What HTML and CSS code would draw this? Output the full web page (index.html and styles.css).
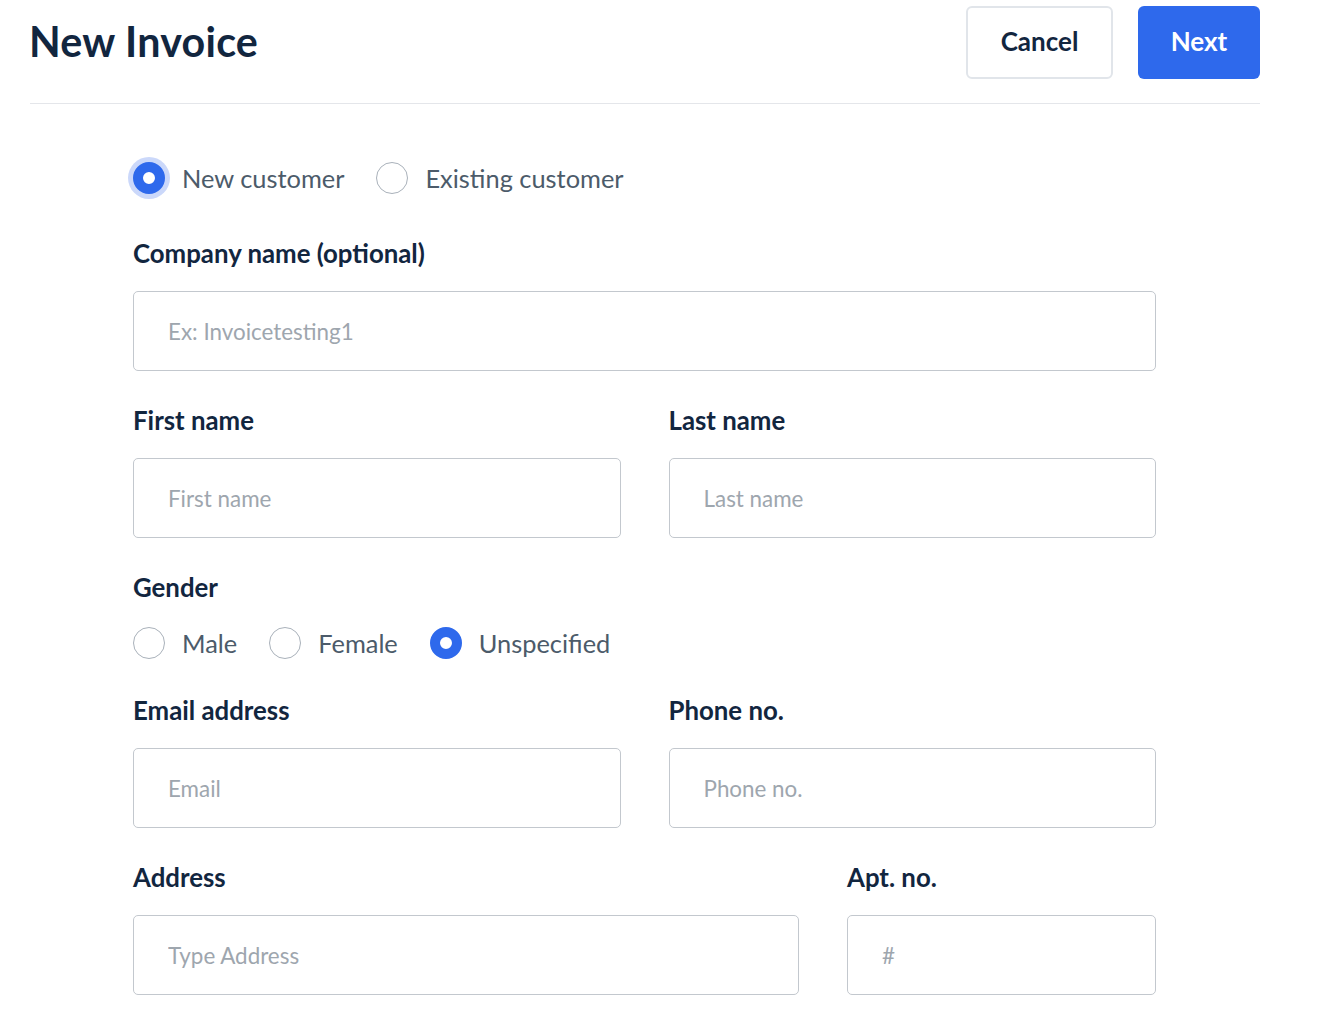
FILE: index.html
```html
<!DOCTYPE html>
<html lang="en">
<head>
  <meta charset="UTF-8" />
  <meta name="viewport" content="width=device-width, initial-scale=1.0"/>
  <title>New Invoice</title>
  <link rel="stylesheet" href="styles.css">
</head>
<body>
  <div class="page">
    <div class="header">
      <h1>New Invoice</h1>
      <div class="header-actions">
        <button class="btn cancel-btn">Cancel</button>
        <button class="btn next-btn">Next</button>
      </div>
    </div>

    <form class="invoice-form">
      <div class="radio-row customer-type">
        <label class="radio-option">
          <input type="radio" name="customer" class="radio focus" checked />
          <span>New customer</span>
        </label>
        <label class="radio-option">
          <input type="radio" name="customer" class="radio" />
          <span>Existing customer</span>
        </label>
      </div>

      <div class="field">
        <label class="field-label">Company name (optional)</label>
        <input type="text" class="text-input" placeholder="Ex: Invoicetesting1" />
      </div>

      <div class="field-row">
        <div class="field">
          <label class="field-label">First name</label>
          <input type="text" class="text-input" placeholder="First name" />
        </div>
        <div class="field">
          <label class="field-label">Last name</label>
          <input type="text" class="text-input" placeholder="Last name" />
        </div>
      </div>

      <div class="field gender-field">
        <label class="field-label">Gender</label>
        <div class="radio-row gender-row">
          <label class="radio-option">
            <input type="radio" name="gender" class="radio" />
            <span>Male</span>
          </label>
          <label class="radio-option">
            <input type="radio" name="gender" class="radio" />
            <span>Female</span>
          </label>
          <label class="radio-option">
            <input type="radio" name="gender" class="radio" checked />
            <span>Unspecified</span>
          </label>
        </div>
      </div>

      <div class="field-row">
        <div class="field">
          <label class="field-label">Email address</label>
          <input type="email" class="text-input" placeholder="Email" />
        </div>
        <div class="field">
          <label class="field-label">Phone no.</label>
          <input type="tel" class="text-input" placeholder="Phone no." />
        </div>
      </div>

      <div class="field-row address-row">
        <div class="field">
          <label class="field-label">Address</label>
          <input type="text" class="text-input" placeholder="Type Address" />
        </div>
        <div class="field">
          <label class="field-label">Apt. no.</label>
          <input type="text" class="text-input" placeholder="#" />
        </div>
      </div>
    </form>
  </div>
</body>
</html>
```

FILE: styles.css
```css
body {
  font-family: Lato, 'Open Sans', Arial, sans-serif;
  background-color: #fff;
  color: #12263f;
  margin: 0;
  padding: 0;
}

.page {
  padding: 6px 60px 0 30px;
}

.header {
  display: flex;
  justify-content: space-between;
  align-items: center;
  border-bottom: 1px solid #e4e6ea;
  padding-bottom: 24px;
}

.header h1 {
  margin: 0 0 0 -1px;
  padding-bottom: 4px;
  font-size: 41.2px;
  font-weight: 700;
  color: #12263f;
  line-height: 66px;
  letter-spacing: 0.25px;
}

.header-actions {
  display: flex;
  gap: 25px;
}

.btn {
  font-family: inherit;
  font-size: 26px;
  font-weight: 700;
  height: 73px;
  padding: 0 0 3px;
  border-radius: 6px;
  cursor: pointer;
}

.cancel-btn {
  width: 147px;
  background-color: #fff;
  color: #12263f;
  border: 2px solid #e1e5ea;
}

.next-btn {
  width: 122px;
  background-color: #2e69ec;
  color: #fff;
  border: none;
}

.invoice-form {
  width: 1023px;
  margin-left: 103px;
  padding-top: 58px;
}

.radio-row {
  display: flex;
  align-items: center;
}

.customer-type {
  gap: 32px;
  margin-bottom: 45px;
}

.radio-option {
  display: flex;
  align-items: center;
  gap: 17px;
  font-size: 25.4px;
  line-height: 32px;
  color: #4c5b6a;
  cursor: pointer;
}

.radio {
  appearance: none;
  -webkit-appearance: none;
  margin: 0;
  width: 32px;
  height: 32px;
  border: 1px solid #a9b1ba;
  border-radius: 50%;
  background: #fff;
  flex-shrink: 0;
}

.radio:checked {
  border: 10px solid #2e69ec;
}

.radio.focus:checked {
  box-shadow: 0 0 0 5px #cbd8fa;
}

.field {
  display: flex;
  flex-direction: column;
  margin-bottom: 35px;
}

.field-label {
  font-size: 25.8px;
  font-weight: 700;
  line-height: 28px;
  color: #12263f;
  margin-bottom: 24px;
}

.text-input {
  font-family: inherit;
  font-size: 22.4px;
  height: 80px;
  box-sizing: border-box;
  padding: 0 34px;
  border: 1px solid #c3c8ce;
  border-radius: 5px;
  color: #12263f;
  outline: none;
}

.text-input::placeholder {
  color: #9ea6ae;
}

.field-row {
  display: grid;
  grid-template-columns: 1fr 1fr;
  gap: 48px;
}

.address-row {
  grid-template-columns: 1fr 309px;
}

.gender-field .field-label {
  margin-bottom: 26px;
}

.gender-row {
  gap: 32px;
}

.gender-field {
  margin-bottom: 37px;
}
```
